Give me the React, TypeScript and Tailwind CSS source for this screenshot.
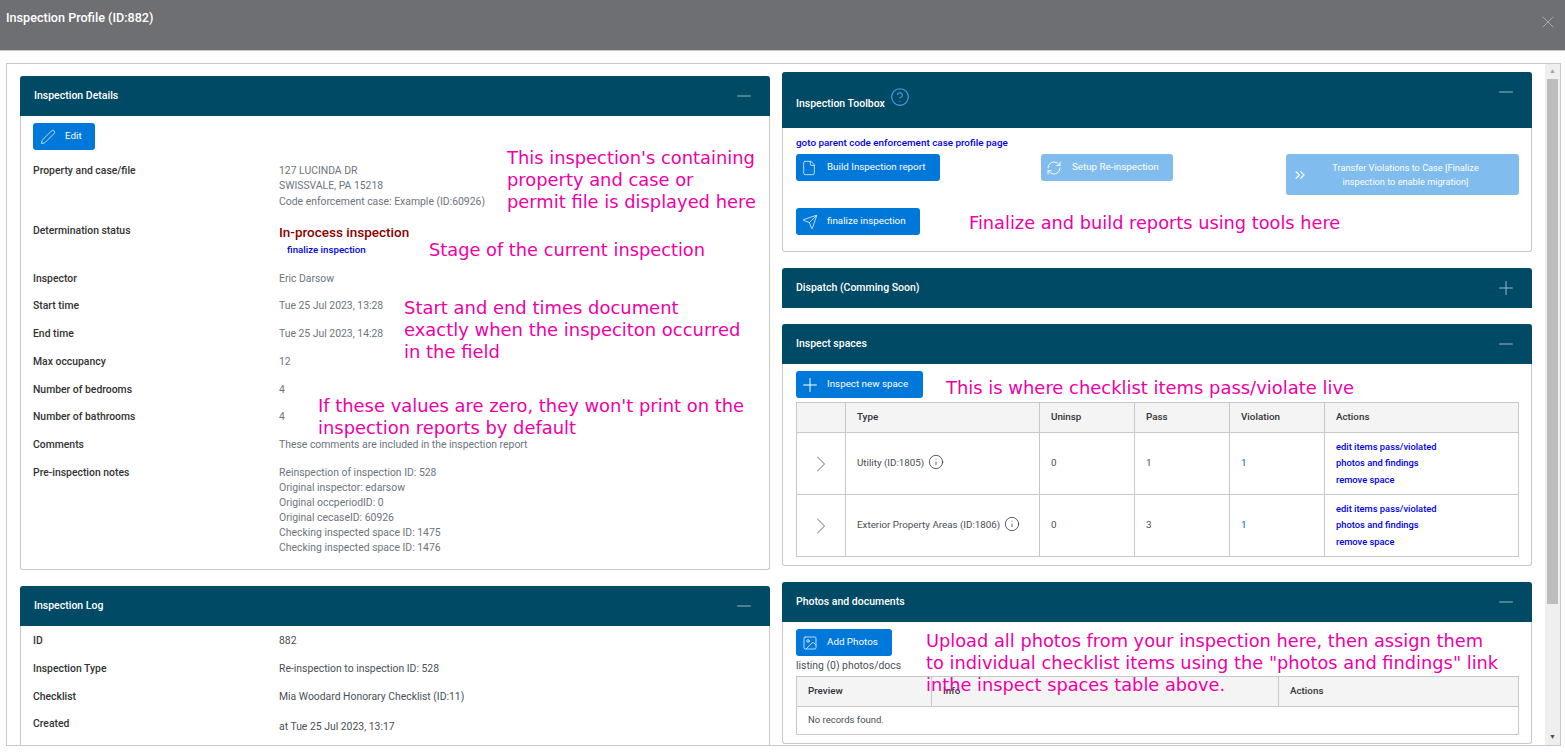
import { ReactNode } from "react";
import {
  ChevronRight,
  ChevronsRight,
  CircleHelp,
  File,
  Image,
  Info,
  Minus,
  Pen,
  Plus,
  RefreshCw,
  Send,
  X,
} from "lucide-react";

function PanelHeader({
  title,
  height,
  collapsed,
  toolbox,
}: {
  title: string;
  height: string;
  collapsed?: boolean;
  toolbox?: boolean;
}) {
  return (
    <div
      className={`flex items-center justify-between bg-[#004a66] rounded-t-[3px] pl-[14px] pr-[15px] text-white ${height}`}
    >
      <div className="flex items-center text-[10.5px] font-medium">
        <span className={toolbox ? "mt-[8px]" : ""}>{title}</span>
        {toolbox && (
          <CircleHelp size={20} strokeWidth={1.3} className="ml-[5px] mb-[6px] text-[#4aa3e8]" />
        )}
      </div>
      {collapsed ? (
        <Plus size={22} strokeWidth={1.1} className="text-[#9fb6c1]" />
      ) : (
        <Minus size={22} strokeWidth={1.1} className={`text-[#9fb6c1] ${toolbox ? "mb-[16px]" : ""}`} />
      )}
    </div>
  );
}

function BlueButton({
  icon,
  label,
  className,
  disabled,
}: {
  icon: ReactNode;
  label: ReactNode;
  className: string;
  disabled?: boolean;
}) {
  return (
    <div
      className={`flex items-center rounded-[3px] text-white text-[9.8px] ${
        disabled ? "bg-[#80bced]" : "bg-[#0078d9]"
      } ${className}`}
    >
      {icon}
      {label}
    </div>
  );
}

function Row({
  label,
  height,
  labelClass,
  children,
}: {
  label: string;
  height: string;
  labelClass?: string;
  children: ReactNode;
}) {
  return (
    <div className={`flex pl-[12px] ${height}`}>
      <div className={`w-[246px] shrink-0 font-medium text-[#333333] text-[10.4px] leading-[14px] ${labelClass ?? ""}`}>
        {label}
      </div>
      <div className="text-[10.4px] leading-[14px] text-[#6c757d]">{children}</div>
    </div>
  );
}

function Link({ children, className }: { children: ReactNode; className?: string }) {
  return <div className={`text-[#0000ee] font-medium ${className ?? "text-[9.7px]"}`}>{children}</div>;
}

function SpaceRow({ name, pass }: { name: string; pass: string }) {
  return (
    <div className="flex h-[62px] border-t border-[#c8c8c8] text-[9.8px] text-[#495057]">
      <div className="w-[49px] flex items-center justify-center border-r border-[#c8c8c8]">
        <ChevronRight size={28} strokeWidth={0.9} className="text-[#8a8a8a]" />
      </div>
      <div className="w-[194px] flex items-center pl-[11px] border-r border-[#c8c8c8] whitespace-nowrap">
        {name}
        <Info size={16} strokeWidth={1.1} className="ml-[4px] mb-[3px] text-[#222222]" />
      </div>
      <div className="w-[95px] flex items-center pl-[11px] border-r border-[#c8c8c8]">0</div>
      <div className="w-[95px] flex items-center pl-[11px] border-r border-[#c8c8c8]">{pass}</div>
      <div className="w-[95px] flex items-center pl-[11px] border-r border-[#c8c8c8] text-[#0a5fb0]">1</div>
      <div className="flex-1 flex flex-col justify-center pl-[11px] leading-[16.5px]">
        <Link className="text-[9.35px]">edit items pass/violated</Link>
        <Link className="text-[9.35px]">photos and findings</Link>
        <Link className="text-[9.35px]">remove space</Link>
      </div>
    </div>
  );
}

function Note({ className, children }: { className: string; children: ReactNode }) {
  return (
    <div
      className={`absolute whitespace-nowrap text-[#ee00a6] leading-[22px] font-['DejaVu_Sans',sans-serif] ${className}`}
    >
      {children}
    </div>
  );
}

export default function App() {
  return (
    <div className="relative h-[753px] overflow-hidden bg-white font-['Roboto',sans-serif]">
      <div className="flex justify-between h-[51px] bg-[#6e6f72] border-b border-[#c8c8c8] pl-[6px] pr-[7px]">
        <div className="text-white text-[12.6px] font-medium leading-[36px]">Inspection Profile (ID:882)</div>
        <X size={20} strokeWidth={1.2} className="text-[#a9aaac] mt-[12px]" />
      </div>

      <div className="flex ml-[6px] mr-[4px] mt-[12px] h-[683px] border border-[#c8c8c8] overflow-hidden">
        <div className="flex-1 flex items-start gap-[12px] pl-[13px] overflow-hidden">
          <div className="w-[750px] shrink-0 pt-[12px]">
            <div className="border border-[#c8c8c8] border-t-0 rounded-[3px]">
              <div className="-mx-px">
                <PanelHeader title="Inspection Details" height="h-[40px]" />
              </div>
              <div className="h-[453px] pt-[7px]">
                <BlueButton
                  className="w-[62px] h-[27px] ml-[12px] mb-[13px]"
                  icon={<Pen size={16} strokeWidth={1.1} className="ml-[7px] mr-[9px]" />}
                  label="Edit"
                />
                <Row label="Property and case/file" height="h-[60px]" labelClass="mt-px">
                  <div className="leading-[15px]">127 LUCINDA DR</div>
                  <div className="leading-[15px]">SWISSVALE, PA 15218</div>
                  <div className="leading-[17px]">Code enforcement case: Example (ID:60926)</div>
                </Row>
                <Row label="Determination status" height="h-[49px]" labelClass="mt-px">
                  <div className="text-[13.5px] font-medium text-[#8b0000] leading-[18px]">In-process inspection</div>
                  <Link className="ml-[8px] mt-[2px] text-[9.7px]">finalize inspection</Link>
                </Row>
                <Row label="Inspector" height="h-[27px]">Eric Darsow</Row>
                <Row label="Start time" height="h-[28px]">Tue 25 Jul 2023, 13:28</Row>
                <Row label="End time" height="h-[28px]">Tue 25 Jul 2023, 14:28</Row>
                <Row label="Max occupancy" height="h-[28px]">12</Row>
                <Row label="Number of bedrooms" height="h-[27px]">4</Row>
                <Row label="Number of bathrooms" height="h-[28px]">4</Row>
                <Row label="Comments" height="h-[28px]">These comments are included in the inspection report</Row>
                <Row label="Pre-inspection notes" height="h-[76px]">
                  <div className="leading-[15.1px] -mt-px">
                    <div>Reinspection of inspection ID: 528</div>
                    <div>Original inspector: edarsow</div>
                    <div>Original occperiodID: 0</div>
                    <div>Original cecaseID: 60926</div>
                    <div>Checking inspected space ID: 1475</div>
                    <div>Checking inspected space ID: 1476</div>
                  </div>
                </Row>
              </div>
            </div>

            <div className="mt-[16px] border-x border-[#c8c8c8] rounded-t-[3px]">
              <div className="-mx-px">
                <PanelHeader title="Inspection Log" height="h-[40px]" />
              </div>
              <div className="pt-[8px] h-[200px]">
                <Row label="ID" height="h-[28px]"><span className="text-[#495057]">882</span></Row>
                <Row label="Inspection Type" height="h-[28px]">
                  <span className="text-[#495057]">Re-inspection to inspection ID: 528</span>
                </Row>
                <Row label="Checklist" height="h-[27px]">
                  <span className="text-[#495057]">Mia Woodard Honorary Checklist (ID:11)</span>
                </Row>
                <Row label="Created" height="h-[28px]">
                  <div className="text-[#495057] mt-[3px]">at Tue 25 Jul 2023, 13:17</div>
                </Row>
              </div>
            </div>
          </div>

          <div className="w-[750px] shrink-0 pt-[8px]">
            <div className="border border-[#c8c8c8] border-t-0 rounded-[3px]">
              <div className="-mx-px">
                <PanelHeader title="Inspection Toolbox" height="h-[56px]" toolbox />
              </div>
              <div className="h-[123px] pl-[13px] pr-[12px] pt-[8px]">
                <Link className="leading-[13px] text-[9.9px]">goto parent code enforcement case profile page</Link>
                <div className="flex mt-[5px] items-start">
                  <BlueButton
                    className="w-[144px] h-[27px]"
                    icon={<File size={16} strokeWidth={1.1} className="ml-[5px] mr-[10px]" />}
                    label="Build Inspection report"
                  />
                  <BlueButton
                    disabled
                    className="w-[132px] h-[27px] ml-[101px]"
                    icon={<RefreshCw size={16} strokeWidth={1.4} className="ml-[5px] mr-[10px]" />}
                    label="Setup Re-inspection"
                  />
                  <BlueButton
                    disabled
                    className="w-[233px] h-[41px] ml-[113px]"
                    icon={<ChevronsRight size={16} strokeWidth={1.7} className="ml-[6px] shrink-0" />}
                    label={
                      <div className="flex-1 text-center text-[9.2px] leading-[14px] pr-[16px] whitespace-nowrap">
                        Transfer Violations to Case [Finalize
                        <br />
                        inspection to enable migration]
                      </div>
                    }
                  />
                </div>
                <BlueButton
                  className="w-[124px] h-[27px] mt-[13px]"
                  icon={<Send size={16} strokeWidth={1.1} className="ml-[6px] mr-[9px]" />}
                  label="finalize inspection"
                />
              </div>
            </div>

            <div className="mt-[16px]">
              <PanelHeader title="Dispatch (Comming Soon)" height="h-[40px]" collapsed />
            </div>

            <div className="mt-[16px] border border-[#c8c8c8] border-t-0 rounded-[3px]">
              <div className="-mx-px">
                <PanelHeader title="Inspect spaces" height="h-[40px]" />
              </div>
              <div className="h-[201px] pl-[13px] pr-[12px] pt-[7px]">
                <BlueButton
                  className="w-[127px] h-[27px]"
                  icon={<Plus size={22} strokeWidth={1.1} className="ml-[3px] mr-[6px]" />}
                  label="Inspect new space"
                />
                <div className="mt-[4px] border border-[#c8c8c8]">
                  <div className="flex h-[29px] bg-[#f4f4f4] text-[9.8px] font-medium text-[#333333] items-stretch">
                    <div className="w-[49px] border-r border-[#c8c8c8]" />
                    <div className="w-[194px] pl-[11px] border-r border-[#c8c8c8] leading-[28px]">Type</div>
                    <div className="w-[95px] pl-[11px] border-r border-[#c8c8c8] leading-[28px]">Uninsp</div>
                    <div className="w-[95px] pl-[11px] border-r border-[#c8c8c8] leading-[28px]">Pass</div>
                    <div className="w-[95px] pl-[11px] border-r border-[#c8c8c8] leading-[28px]">Violation</div>
                    <div className="pl-[11px] leading-[28px]">Actions</div>
                  </div>
                  <SpaceRow name="Utility (ID:1805)" pass="1" />
                  <SpaceRow name="Exterior Property Areas (ID:1806)" pass="3" />
                </div>
              </div>
            </div>

            <div className="mt-[16px] border border-[#c8c8c8] border-t-0 rounded-[3px]">
              <div className="-mx-px">
                <PanelHeader title="Photos and documents" height="h-[40px]" />
              </div>
              <div className="h-[121px] pl-[13px] pr-[12px] pt-[7px]">
                <BlueButton
                  className="w-[96px] h-[27px]"
                  icon={<Image size={16} strokeWidth={1.1} className="ml-[6px] mr-[9px]" />}
                  label="Add Photos"
                />
                <div className="text-[10.4px] leading-[20px] text-[#495057]">listing (0) photos/docs</div>
                <div className="border border-[#c8c8c8]">
                  <div className="flex h-[29px] bg-[#f4f4f4] text-[9.8px] font-medium text-[#333333] leading-[28px]">
                    <div className="w-[135px] pl-[11px] border-r border-[#c8c8c8]">Preview</div>
                    <div className="w-[347px] pl-[11px] border-r border-[#c8c8c8]">Info</div>
                    <div className="pl-[11px]">Actions</div>
                  </div>
                  <div className="h-[28px] border-t border-[#c8c8c8] pl-[11px] text-[9.5px] leading-[26px] text-[#495057]">
                    No records found.
                  </div>
                </div>
              </div>
            </div>
          </div>
        </div>

        <div className="w-[15px] shrink-0 flex flex-col items-center bg-[#efefef]">
          <div className="h-[15px] text-[7px] leading-[15px] text-[#a3a3a3]">▲</div>
          <div className="h-[525px] w-[11px] bg-[#bdbdbd]" />
          <div className="flex-1" />
          <div className="h-[15px] text-[7px] leading-[15px] text-[#505050]">▼</div>
        </div>
      </div>

      <Note className="left-[507px] top-[147px] text-[17.88px]">
        This inspection's containing
        <br />
        property and case or
        <br />
        permit file is displayed here
      </Note>
      <Note className="left-[429px] top-[239px] text-[17.8px]">Stage of the current inspection</Note>
      <Note className="left-[404px] top-[297px] text-[17.95px]">
        Start and end times document
        <br />
        exactly when the inspeciton occurred
        <br />
        in the field
      </Note>
      <Note className="left-[318px] top-[395px] text-[17.9px]">
        If these values are zero, they won't print on the
        <br />
        inspection reports by default
      </Note>
      <Note className="left-[969px] top-[212px] text-[17.75px]">Finalize and build reports using tools here</Note>
      <Note className="left-[946px] top-[377px] text-[17.93px]">This is where checklist items pass/violate live</Note>
      <Note className="left-[926px] top-[630px] text-[17.8px]">
        Upload all photos from your inspection here, then assign them
        <br />
        to individual checklist items using the "photos and findings" link
        <br />
        inthe inspect spaces table above.
      </Note>
    </div>
  );
}
